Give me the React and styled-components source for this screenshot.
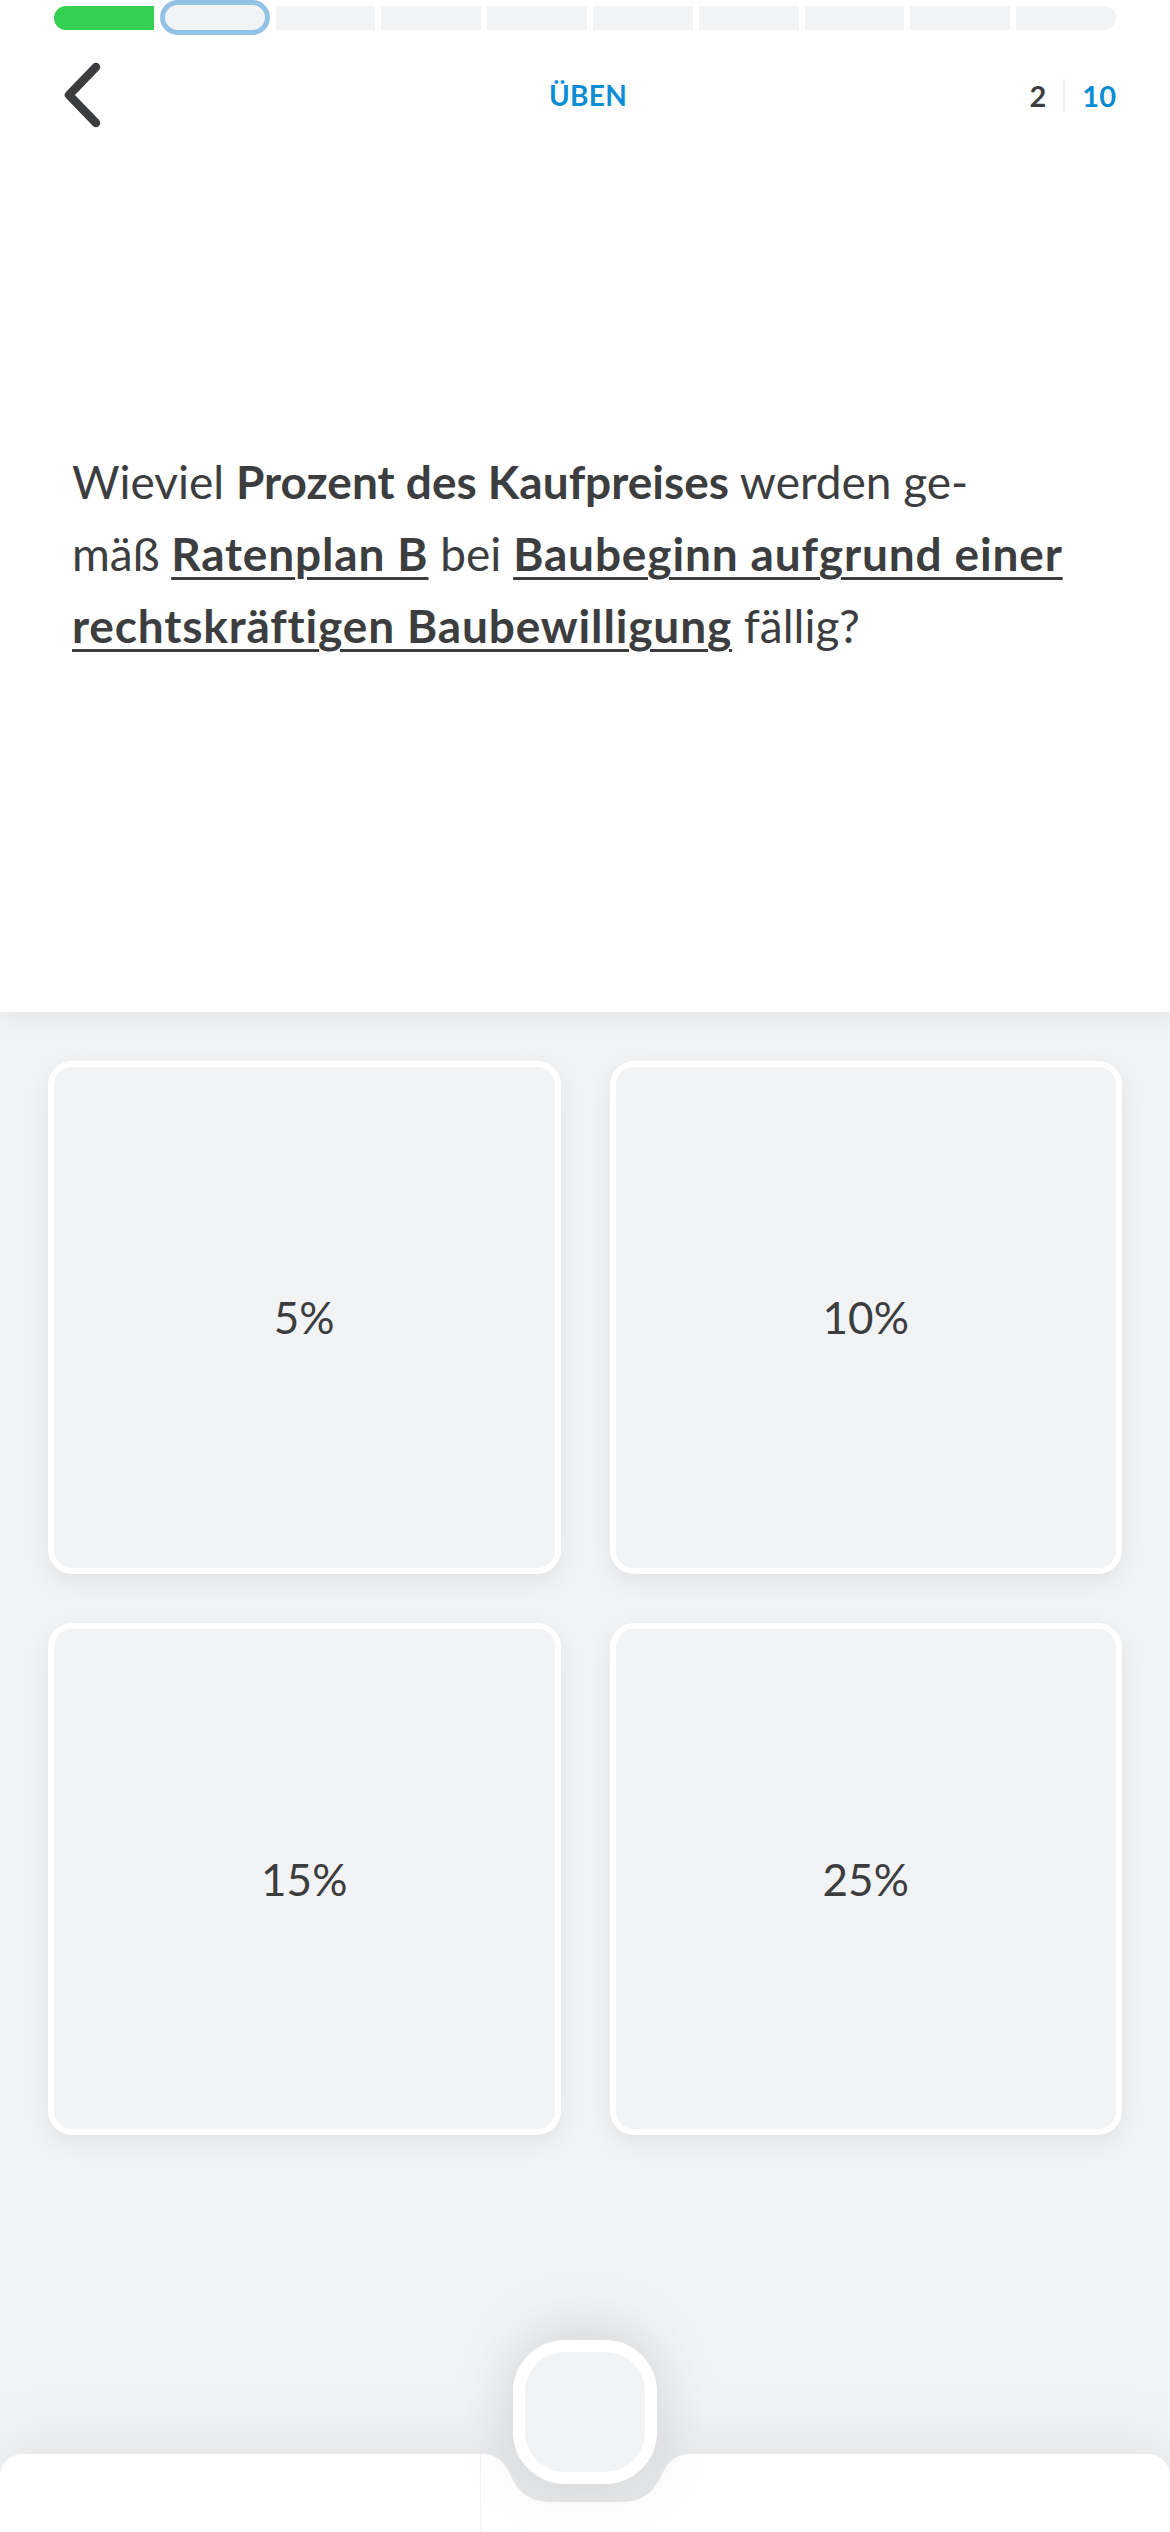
import React from "react"
import styled, { createGlobalStyle } from "styled-components"

const GlobalStyle = createGlobalStyle`
  * { box-sizing: border-box; }
  html, body {
    margin: 0;
    padding: 0;
    background: #f2f3f5;
    font-family: Lato, "Open Sans", "Liberation Sans", sans-serif;
    color: #3c3d3f;
  }
`

const answers = ["5%", "10%", "15%", "25%"]
const totalSteps = 10
const currentStep = 2

function BackIcon() {
  return (
    <svg width="50" height="76" viewBox="0 0 50 76" fill="none">
      <path d="M36 10 L9 38 L36 66" stroke="#3c3d3f" strokeWidth="8.5"
        strokeLinecap="round" strokeLinejoin="round" />
    </svg>
  )
}

function Progress() {
  const steps = []
  for (let i = 1; i <= totalSteps; i++) {
    let state = "todo"
    if (i < currentStep) state = "done"
    if (i === currentStep) state = "active"
    steps.push(<Step key={i} state={state} first={i === 1} last={i === totalSteps} />)
  }
  return <ProgressBar>{steps}</ProgressBar>
}

function Cradle() {
  return (
    <CradleShape width="210" height="78" viewBox="0 0 210 78">
      <path d="M0 0 C18 0 24 10 30 22 C38 40 50 48 70 48 L140 48 C160 48 172 40 180 22 C186 10 192 0 210 0 Z"
        fill="#e7e8ea" />
      <path d="M0 0 C18 0 24 10 30 22 C38 40 50 48 70 48 L140 48 C160 48 172 40 180 22 C186 10 192 0 210 0 L210 78 L0 78 Z"
        fill="#ffffff" />
    </CradleShape>
  )
}

export default function App() {
  return (
    <>
      <GlobalStyle />
      <Screen>
        <TopPanel>
          <Progress />
          <Header>
            <BackButton><BackIcon /></BackButton>
            <Title>ÜBEN</Title>
            <Counter>
              <span>{currentStep}</span>
              <CounterDivider />
              <Total>{totalSteps}</Total>
            </Counter>
          </Header>
          <Question>
            Wieviel <b>Prozent des Kaufpreises</b> werden ge-<br />
            mäß <Term>Ratenplan B</Term> bei <Term>Baubeginn aufgrund einer</Term><br />
            <Term>rechtskräftigen Baubewilligung</Term> fällig?
          </Question>
        </TopPanel>

        <Answers>
          {answers.map((a) => (
            <AnswerCard key={a}>{a}</AnswerCard>
          ))}
        </Answers>

        <Dock>
          <DockTab side="left" />
          <Cradle />
          <DockTab side="right" />
          <CheckButton />
        </Dock>
      </Screen>
    </>
  )
}

const Screen = styled.div`
  display: flex;
  flex-direction: column;
  height: 2532px;
  overflow: hidden;
  background: #f2f3f5;
`

const TopPanel = styled.div`
  position: relative;
  z-index: 2;
  height: 1012px;
  flex-shrink: 0;
  background: #ffffff;
  box-shadow: 0 6px 28px rgba(0, 0, 0, 0.07);
`

const ProgressBar = styled.div`
  display: flex;
  align-items: flex-start;
  gap: 6px;
  padding: 6px 54px 0 54px;
  height: 30px;
`

const Step = styled.div`
  flex: 1;
  height: ${p => p.state === "active" ? "35px" : "24px"};
  margin-top: ${p => p.state === "active" ? "-6px" : "0"};
  background: ${p => p.state === "done" ? "#34d052" : "#f2f3f5"};
  border: ${p => p.state === "active" ? "5px solid #92c2e6" : "none"};
  border-radius: ${p => p.state === "active" ? "18px"
    : `${p.first ? "12px" : "0"} ${p.last ? "12px" : "0"} ${p.last ? "12px" : "0"} ${p.first ? "12px" : "0"}`};
`

const Header = styled.div`
  display: grid;
  grid-template-columns: 1fr auto 1fr;
  align-items: center;
  height: 130px;
  padding: 0 54px 0 60px;
`

const BackButton = styled.div`
  display: flex;
  align-items: center;
  justify-self: start;
`

const Title = styled.div`
  font-size: 28px;
  font-weight: 700;
  letter-spacing: 0.3px;
  color: #0b8dd6;
`

const Counter = styled.div`
  justify-self: end;
  display: flex;
  align-items: center;
  gap: 17px;
  font-size: 29px;
  font-weight: 700;
  color: #3c3d3f;
`

const CounterDivider = styled.div`
  width: 2px;
  height: 33px;
  background: #eceef0;
`

const Total = styled.span`
  color: #0b8dd6;
`

const Question = styled.p`
  margin: 286px 0 0 0;
  padding: 0 72px;
  font-size: 46px;
  line-height: 72px;
  white-space: nowrap;
  color: #3c3d3f;

  b {
    font-weight: 700;
  }
`

const Term = styled.b`
  letter-spacing: 0.85px;
  text-decoration: underline;
  text-decoration-thickness: 3px;
  text-underline-offset: 6px;
`

const Answers = styled.div`
  display: grid;
  grid-template-columns: 1fr 1fr;
  gap: 49px;
  padding: 49px 48px 0 48px;
`

const AnswerCard = styled.div`
  aspect-ratio: 1;
  display: flex;
  align-items: center;
  justify-content: center;
  background: #f2f3f5;
  border: 6px solid #ffffff;
  border-radius: 24px;
  box-shadow: 0 8px 24px rgba(0, 0, 0, 0.07);
  font-size: 44px;
  color: #3c3d3f;
`

const Dock = styled.div`
  position: relative;
  margin-top: auto;
  display: flex;
  height: 78px;
  flex-shrink: 0;
  filter: drop-shadow(0 -14px 30px rgba(0, 0, 0, 0.06));
`

const DockTab = styled.div`
  flex: 1;
  background: #ffffff;
  border-radius: ${p => p.side === "left" ? "22px 0 0 0" : "0 22px 0 0"};
  border-right: ${p => p.side === "left" ? "1px solid #f1f2f3" : "none"};
`

const CradleShape = styled.svg`
  display: block;
  flex-shrink: 0;
`

const CheckButton = styled.div`
  position: absolute;
  left: 50%;
  top: -114px;
  transform: translateX(-50%);
  width: 144px;
  height: 144px;
  background: #f2f3f5;
  border: 12px solid #ffffff;
  border-radius: 52px;
  box-shadow: 0 0 70px rgba(0, 0, 0, 0.09);
`
